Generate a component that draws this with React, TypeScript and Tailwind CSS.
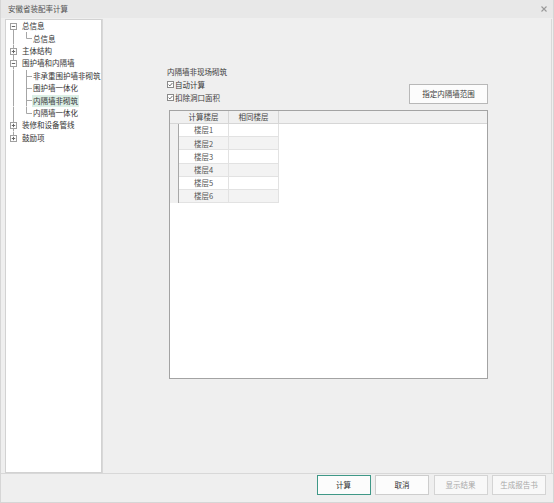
import React from 'react';

const H = 12.4;
const LINE = '#a6a6a6';

type Row = {
  label: string;
  lvl: 0 | 1;
  exp?: 'minus' | 'plus';
  rootPos?: 'first' | 'mid' | 'last';
  childLast?: boolean;
  selected?: boolean;
};

const rows: Row[] = [
  { label: '总信息', lvl: 0, exp: 'minus', rootPos: 'first' },
  { label: '总信息', lvl: 1, childLast: true },
  { label: '主体结构', lvl: 0, exp: 'plus', rootPos: 'mid' },
  { label: '围护墙和内隔墙', lvl: 0, exp: 'minus', rootPos: 'mid' },
  { label: '非承重围护墙非砌筑', lvl: 1 },
  { label: '围护墙一体化', lvl: 1 },
  { label: '内隔墙非砌筑', lvl: 1, selected: true },
  { label: '内隔墙一体化', lvl: 1, childLast: true },
  { label: '装修和设备管线', lvl: 0, exp: 'plus', rootPos: 'mid' },
  { label: '鼓励项', lvl: 0, exp: 'plus', rootPos: 'last' },
];

const C = 6.5;

function RootGutter({ pos, exp }: { pos: 'first' | 'mid' | 'last'; exp: 'minus' | 'plus' }) {
  return (
    <svg width="15" height={H} viewBox={`0 0 15 ${H}`} className="shrink-0">
      {pos !== 'first' && <line x1="7.5" y1="0" x2="7.5" y2={C - 3} stroke={LINE} strokeWidth="1" />}
      {pos !== 'last' && <line x1="7.5" y1={C + 3} x2="7.5" y2={H} stroke={LINE} strokeWidth="1" />}
      <rect x="4.5" y={C - 3} width="6" height="6" fill="#fff" stroke="#a0a0a0" strokeWidth="1" />
      <line x1="5.8" y1={C} x2="9.2" y2={C} stroke="#666" strokeWidth="1" />
      {exp === 'plus' && <line x1="7.5" y1={C - 1.7} x2="7.5" y2={C + 1.7} stroke="#666" strokeWidth="1" />}
    </svg>
  );
}

function ChildGutter({ last }: { last?: boolean }) {
  return (
    <>
      <svg width="15" height={H} viewBox={`0 0 15 ${H}`} className="shrink-0">
        <line x1="7.5" y1="0" x2="7.5" y2={H} stroke={LINE} strokeWidth="1" />
      </svg>
      <svg width="11" height={H} viewBox={`0 0 11 ${H}`} className="shrink-0">
        <line x1="5.5" y1="0" x2="5.5" y2={last ? C : H} stroke={LINE} strokeWidth="1" />
        <line x1="5.5" y1={C} x2="11" y2={C} stroke={LINE} strokeWidth="1" />
      </svg>
    </>
  );
}

function CheckBox({ label }: { label: string }) {
  return (
    <div className="flex items-center h-[13px]">
      <span className="w-[7px] h-[7px] border border-[#8a8a8a] bg-white flex items-center justify-center mr-[1px]">
        <svg width="5" height="5" viewBox="0 0 5 5">
          <path d="M0.6 2.6 L1.9 3.9 L4.4 1" fill="none" stroke="#444" strokeWidth="0.8" />
        </svg>
      </span>
      <span>{label}</span>
    </div>
  );
}

export default function App() {
  const floors = ['楼层1', '楼层2', '楼层3', '楼层4', '楼层5', '楼层6'];
  return (
    <div className="w-[554px] h-[503px] flex flex-col bg-[#efefef] border border-t-0 border-[#d6d6d6] text-[7.5px] text-[#3a3a3a] font-['Noto_Sans_CJK_SC','Liberation_Sans',sans-serif] overflow-hidden">
      <div className="h-[18px] shrink-0 bg-[#e8e8e8] flex items-center justify-between pl-[7px] pr-[6px]">
        <span className="text-[#555] leading-[18px]">安徽省装配率计算</span>
        <svg width="6" height="6" viewBox="0 0 6 6">
          <path d="M0.5 0.5 L5.5 5.5 M5.5 0.5 L0.5 5.5" stroke="#999" strokeWidth="1.1" />
        </svg>
      </div>

      <div className="flex flex-1 pt-[1px] pl-[4px] pr-[1px] min-h-0">
        <div className="w-[97px] h-[454px] bg-white border border-[#d2d2d2] flex flex-col">
          {rows.map((r, i) => (
            <div key={i} className="flex items-center h-[12.4px] text-[#333]">
              {r.lvl === 0 ? (
                <RootGutter pos={r.rootPos!} exp={r.exp!} />
              ) : (
                <ChildGutter last={r.childLast} />
              )}
              <span
                className={`leading-[12px] px-[1px] whitespace-nowrap ${r.selected ? 'bg-[#dcefe6]' : ''}`}
              >
                {r.label}
              </span>
            </div>
          ))}
        </div>

        <div className="flex-1 h-[454px] border-l border-r border-[#d8d8d8] pl-[64px] pt-[46px]">
          <div className="w-[321px] flex flex-col">
            <div className="leading-[13px] h-[13px]">内隔墙非现场砌筑</div>
            <div className="flex items-end justify-between">
              <div className="flex flex-col">
                <CheckBox label="自动计算" />
                <CheckBox label="扣除洞口面积" />
              </div>
              <button className="w-[79px] h-[20px] border border-[#b8b8b8] bg-[#fcfcfc] text-[#3a3a3a] flex items-center justify-center">
                指定内隔墙范围
              </button>
            </div>
            <div className="mt-[6px] ml-[2px] w-[319px] h-[269px] border border-[#a3a3a3] bg-white flex flex-col">
              <div className="flex h-[13px] bg-[#f0f0f0] border-b border-[#d6d6d6] text-[#444]">
                <div className="w-[9px]" />
                <div className="w-[50px] border-r border-[#d6d6d6] flex items-center justify-center">计算楼层</div>
                <div className="w-[50px] border-r border-[#d6d6d6] flex items-center justify-center">相同楼层</div>
                <div className="flex-1" />
              </div>
              {floors.map((f, i) => (
                <div key={f} className="flex h-[13.2px]">
                  <div className="w-[9px] bg-[#f0f0f0] border-r border-[#a8a8a8]" />
                  <div
                    className={`w-[50px] border-r border-b border-[#e2e2e2] flex items-center justify-center text-[#555] ${i % 2 === 1 ? 'bg-[#f3f3f3]' : 'bg-white'}`}
                  >
                    {f}
                  </div>
                  <div
                    className={`w-[50px] border-r border-b border-[#e2e2e2] ${i % 2 === 1 ? 'bg-[#f3f3f3]' : 'bg-white'}`}
                  />
                  <div className="flex-1" />
                </div>
              ))}
            </div>
          </div>
        </div>
      </div>

      <div className="h-[29px] shrink-0 border-t border-[#d8d8d8] flex justify-end items-start pt-[1px] pr-[7px] gap-[4.5px]">
        <button className="w-[54px] h-[20px] border-[1.5px] border-[#3f9887] bg-[#fcfcfc] text-[#333] flex items-center justify-center">
          计算
        </button>
        <button className="w-[54px] h-[20px] border border-[#cdcdcd] bg-[#fcfcfc] text-[#333] flex items-center justify-center">
          取消
        </button>
        <button className="w-[54px] h-[20px] border border-[#d4d4d4] bg-[#f8f8f8] text-[#a8a8a8] flex items-center justify-center">
          显示结果
        </button>
        <button className="w-[54px] h-[20px] border border-[#d4d4d4] bg-[#f8f8f8] text-[#a8a8a8] flex items-center justify-center">
          生成报告书
        </button>
      </div>
    </div>
  );
}
